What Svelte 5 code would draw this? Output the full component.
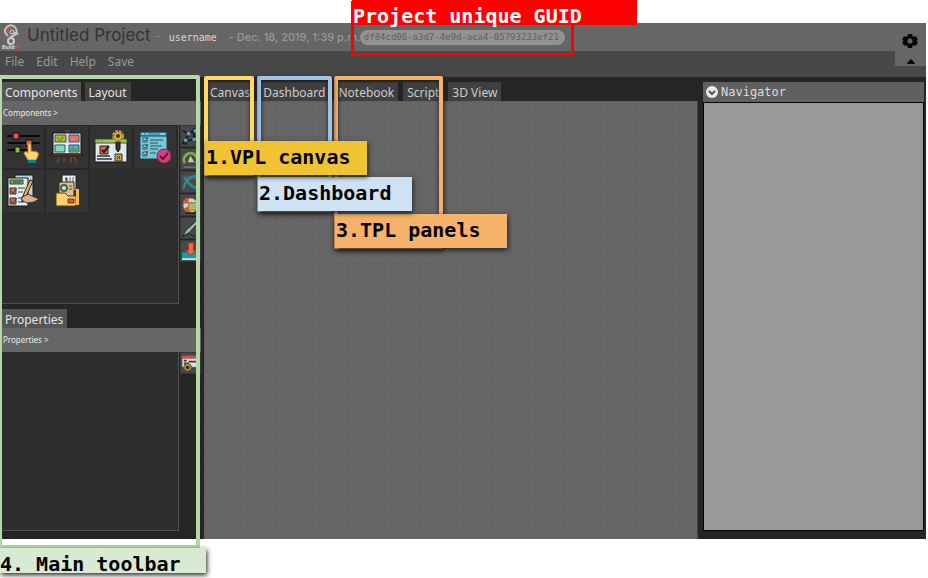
<script>
  const menus = ['File', 'Edit', 'Help', 'Save'];
  const views = ['Canvas', 'Dashboard', 'Notebook', 'Script', '3D View'];
  const parts = ['Sliders', 'Board', 'Settings form', 'Checklist', 'Survey', 'Folder'];
  const tools = ['Network', 'Gauge', 'Orbit', 'Analysis', 'Pen', 'Download'];
</script>

{#snippet partIcon(n)}
  <svg viewBox="0 0 34 34" aria-hidden="true">
    {#if n === 0}
      <path d="M2 6h31M2 13h31M2 20h20" stroke="#090b0d" stroke-width="2" stroke-linecap="round" />
      <path d="M7 3h6v6H7z" fill="#e64b43" stroke="#111" />
      <path d="M20 10h6v6h-6z" fill="#dc6527" stroke="#111" />
      <path d="M9 17h5v6H9z" fill="#8fbd42" stroke="#111" />
      <path d="M22 14q2-2 3 1v6l6 1q2 1 1 4l-2 4h-8l-4-7q1-3 4 0z" fill="#ffd276" stroke="#c88832" />
      <path d="M22 30h8v3h-8z" fill="#078290" />
    {:else if n === 1}
      <path d="M16 0h3v4h-3zM10 26l-3 7M24 26l3 7M14 26v6M21 26v7" fill="#683e2c" stroke="#683e2c" stroke-width="2" />
      <path d="M3 3h28v21H3z" fill="#dceaf5" stroke="#111" />
      <path d="M5 5h11v7H5z" fill="#b8b52d" stroke="#365060" />
      <path d="M19 5h10v7H19z" fill="#ed736a" stroke="#365060" />
      <path d="M5 15h10v7H5z" fill="#83dfb2" stroke="#365060" />
      <path d="M19 15h10v7H19z" fill="#46aee0" stroke="#365060" />
      <path d="M19 22l4-5 3 3 2-2 2 4z" fill="#639b35" />
      <path d="M7 8h2m2 0h3M8 10h4" stroke="#756d19" />
      <path d="M1 24h32v2H1z" fill="#70412e" stroke="#271b17" />
    {:else if n === 2}
      <path d="M1 9h32v23H1z" fill="#e2e7ef" stroke="#111" />
      <path d="M1 9h32v4H1z" fill="#9acb62" stroke="#445524" />
      <path d="M3 11h2m2 0h2" stroke="#e85145" />
      <path d="M6 16h8v8H6z" fill="#e65d4c" stroke="#222" />
      <path d="M8 20l2 2 5-6" fill="none" stroke="#222" stroke-width="2" />
      <path d="M3 26h13M3 29h15" stroke="#59616a" stroke-width="2" />
      <path d="M22 11h4v8l-2 3-2-3z" fill="#333" stroke="#111" />
      <circle cx="24" cy="6" r="5" fill="none" stroke="#c69932" stroke-width="2" stroke-dasharray="3 1" />
      <circle cx="24" cy="6" r="3" fill="#333" stroke="#d9ad3b" stroke-width="2" />
      <path d="M21 24h7v7h-7z" fill="#c6a24d" stroke="#333" /><path d="M23 26l3 3m0-3l-3 3" stroke="#333" />
    {:else if n === 3}
      <path d="M2 2h27v27H2z" fill="#78c6d8" stroke="#164150" />
      <path d="M2 2h27v4H2z" fill="#45a3bd" stroke="#164150" />
      <path d="M4 4h2m2 0h2m12 0h5" stroke="#d8f3f7" />
      <path d="M5 8h4v4H5zM5 15h4v4H5zM5 22h4v4H5z" fill="#b9e3ec" stroke="#174b60" />
      <path d="M6 10l1 1 3-4M6 17l1 1 3-4M6 24l1 1 3-4M12 10h13M12 13h8M12 16h12M12 19h8M12 23h6" fill="none" stroke="#21566b" />
      <circle cx="26" cy="26" r="7" fill="#dc3c82" stroke="#812b50" />
      <path d="M22 26l3 3 5-6" fill="none" stroke="#5e1739" stroke-width="2" />
    {:else if n === 4}
      <path d="M9 1h18v26H9z" fill="#bdd3e1" stroke="#121619" /><path d="M2 4h20v28H2z" fill="#e2edf3" stroke="#121619" />
      <path d="M4 6h13v4H4z" fill="#7eac59" stroke="#234323" /><path d="M7 8h8" stroke="#27482b" />
      <path d="M4 14h6v6H4zM4 24h6v6H4z" fill="#e06851" stroke="#342e2c" />
      <path d="M5 17l2 2 4-5M5 27l2 2 4-5M12 14h7M12 18h5M12 24h6M12 28h6" fill="none" stroke="#344048" />
      <path d="M24 6l3 1-8 18-3 3v-4z" fill="#f2b444" stroke="#292019" />
      <path d="M15 24l7-4 4 2 7 3-5 3-7 1-4-2z" fill="#d6b09a" stroke="#493328" />
    {:else}
      <path d="M12 1h14v16H12z" fill="#e8edf2" stroke="#222" /><path d="M15 4h2v6m3-7v7m3-7v7" stroke="#646a70" />
      <path d="M9 8h15v15H9z" fill="#dfbc91" stroke="#342b23" /><circle cx="14" cy="14" r="3" fill="#ddd" stroke="#376747" stroke-width="2" />
      <path d="M19 12h3m-3 3h3" stroke="#30583c" />
      <path d="M6 19h9l3 3h8v10H6z" fill="#ffd16c" stroke="#5b3c14" /><path d="M26 15h3v16h-3z" fill="#f7bd4f" />
      <path d="M18 25h6v4h-6z" fill="#c95e38" stroke="#71331e" />
    {/if}
  </svg>
{/snippet}

{#snippet toolIcon(n)}
  <svg viewBox="0 0 20 20" aria-hidden="true">
    {#if n === 0}
      <path d="M2 4l6 3 5-3 1-3M8 7l-3 8 9-2-1-9M5 15l-4 3M14 13l4 5M2 15h3v4" fill="none" stroke="#111d22" stroke-width="2" />
      <g fill="#4fa5be"><circle cx="8" cy="7" r="2" /><circle cx="5" cy="14" r="2" /><circle cx="14" cy="13" r="2" /><circle cx="15" cy="4" r="2" /></g>
    {:else if n === 1}
      <path d="M4 14a7 7 0 1 1 12 0" fill="none" stroke="#78ad43" stroke-width="3" /><path d="M7 13l3-7 4 7z" fill="#b8cfa1" /><path d="M3 18h14" stroke="#879279" />
    {:else if n === 2}
      <path d="M18 3Q5 2 3 16M3 4q3 9 16 14" fill="none" stroke="#168bc2" stroke-width="2" /><path d="M2 17Q7 3 19 5M5 2q2 11 14 14" fill="none" stroke="#60933b" />
    {:else if n === 3}
      <circle cx="10" cy="10" r="8" fill="#cfd4d3" stroke="#565c5c" /><path d="M2 8q0-6 6-6v6zM3 13l5-2 2 7q-5 0-7-5" fill="#d65334" /><path d="M8 7h10v8H8z" fill="#83b79b" stroke="#9b722e" /><path d="M9 10h9m-9 3h9" stroke="#d2b23e" stroke-width="2" /><path d="M5 18h13" stroke="#242b2b" stroke-width="2" />
    {:else if n === 4}
      <path d="M2 18l3-6L16 2l2 2L8 15z" fill="#97b6b5" stroke="#172326" /><path d="M1 19l7-4 4 3 7-1" fill="none" stroke="#172326" />
    {:else if n === 5}
      <path d="M1 11h6l3 3 3-3h7v7H1z" fill="#119eaa" /><path d="M1 17h19v2H1z" fill="#c7dcde" /><path d="M8 1h5v8h3l-6 5-5-5h3z" fill="#f26b3d" stroke="#9e4127" />
    {:else}
      <path d="M1 2h19v12H1z" fill="#e0e0e7" stroke="#5d5054" /><path d="M1 2h19v3H1z" fill="#c55347" /><path d="M3 7h3m2 1h10M3 10h5" stroke="#383b47" stroke-width="2" /><circle cx="7" cy="14" r="4" fill="#c29920" stroke="#5f4c16" /><circle cx="7" cy="14" r="2" fill="#333" />
    {/if}
  </svg>
{/snippet}

<div class="page">
  <div class="app">
    <header>
      <svg class="logo" viewBox="0 0 22 26" role="img" aria-label="Build IT">
        <path d="M8 12Q3 8 6 4q4-5 9-1 4 6-2 9l-3 1" fill="none" stroke="#c4c4c4" stroke-width="2" />
        <path d="M8 9q-2-4 3-5" fill="none" stroke="#d75524" stroke-width="2" />
        <circle cx="12" cy="8" r="2" fill="none" stroke="#ddd" /><path d="M14 9l4 1" stroke="#ccc" stroke-width="2" />
        <circle cx="11" cy="17" r="3" fill="none" stroke="#ccc" stroke-width="2" />
        <text x="2" y="25" font-size="5" font-weight="700" fill="#ddd">Build<tspan fill="#d75524">IT</tspan></text>
      </svg>
      <h1>Untitled Project</h1><span class="dash">–</span>
      <span class="user">username</span>
      <span class="date">- Dec. 18, 2019, 1:39 p.m.</span>
      <code>df84cd06-a3d7-4e9d-aca4-05793233ef21</code>
      <button class="gear" aria-label="Settings">
        <svg viewBox="0 0 16 16"><path fill="#080808" fill-rule="evenodd" d="M6 1h4l.5 2 1.400.8 2-.6 2 3.400L14.400 8l1.500 1.400-2 3.400-2-.6-1.400.8-.5 2H6l-.5-2-1.400-.8-2 .6-2-3.400L1.600 8 .1 6.600l2-3.400 2 .6L5.500 3zM8 5.500a2.500 2.500 0 1 0 0 5 2.500 2.500 0 0 0 0-5z" /></svg>
      </button>
    </header>
    <nav>
      {#each menus as m}<button>{m}</button>{/each}
      <button class="collapse" aria-label="Collapse header"><svg viewBox="0 0 10 5"><path d="M1 5q0-1 4-5 4 4 4 5z" fill="#080808" /></svg></button>
    </nav>

    <main>
      <aside class="left">
        <section>
          <div class="tabs side"><button class="on">Components</button><button>Layout</button></div>
          <a class="crumb" href="#components">Components &gt;</a>
          <div class="pane">
            <div class="parts">{#each parts as p, i}<button aria-label={p}>{@render partIcon(i)}</button>{/each}</div>
            <div class="tools">{#each tools as t, i}<button aria-label={t}>{@render toolIcon(i)}</button>{/each}</div>
          </div>
        </section>
        <section>
          <div class="tabs side"><button class="on">Properties</button></div>
          <a class="crumb" href="#properties">Properties &gt;</a>
          <div class="pane">
            <div class="parts"></div>
            <div class="tools"><button aria-label="Form settings">{@render toolIcon(6)}</button></div>
          </div>
        </section>
      </aside>
      <section class="work">
        <div class="tabs views">{#each views as v}<button>{v}</button>{/each}</div>
        <div class="canvas"></div>
      </section>
      <aside class="right">
        <button class="navhead">
          <svg viewBox="0 0 12 12" aria-hidden="true"><circle cx="6" cy="6" r="6" fill="#e8e8e8" /><path d="M3 5l3 3 3-3" fill="none" stroke="#555" stroke-width="2" /></svg>Navigator
        </button>
        <div class="map"></div>
      </aside>
    </main>
  </div>

  <div class="frame green"></div><div class="note green-note">4. Main toolbar</div>
  <div class="frame orange"></div>
  <div class="frame blue"></div>
  <div class="frame yellow"></div>
  <div class="note orange-note">3.TPL panels</div>
  <div class="note blue-note">2.Dashboard</div>
  <div class="note yellow-note">1.VPL canvas</div>
  <div class="frame red"></div><div class="note red-note">Project unique GUID</div>
</div>

<style>
  :global(body) { background: #fff; }
  * { box-sizing: border-box; }
  .page { position: relative; padding: 23px 2px 39px 0; overflow: hidden; font-family: "Noto Sans", "Open Sans", sans-serif; }
  button { border: 0; margin: 0; padding: 0; font: inherit; color: inherit; background: none; }
  svg { display: block; }
  .app { background: #252525; }
  header { display: flex; align-items: center; height: 28px; background: #666; color: #999; white-space: nowrap; }
  .logo { width: 22px; height: 26px; margin-right: 5px; flex: none; }
  h1 { margin: 0 4px 4px 0; font: 400 17px Inter, sans-serif; color: #333; }
  .dash { font-size: 12px; margin-bottom: 4px; color: #858585; }
  .user { margin-left: 8px; font: 10px "DejaVu Sans Mono", monospace; color: #d5d5d5; }
  .date { margin-left: 12px; width: 131px; font: 500 11px Inter, sans-serif; color: #999; }
  code { padding: 0 6px 0 4px; border-radius: 8px; background: #929292; color: #606060; font: 9px/15px "DejaVu Sans Mono", monospace; }
  .gear { margin: 8px 8px 0 auto; }
  .gear svg { width: 16px; height: 16px; }
  nav { display: flex; gap: 12px; height: 26px; padding-left: 5px; align-items: flex-start; background: #484848; color: #999; font-size: 12px; line-height: 21px; }
  .collapse { margin-left: auto; width: 31px; height: 15px; padding: 6px 0 0 11px; background: #666; }
  .collapse svg { width: 10px; height: 5px; }
  main { display: flex; }
  .left { width: 204px; flex: none; padding: 0 3px 8px 2px; background: #252525; }
  .tabs { display: flex; align-items: flex-end; height: 24px; color: #e5e5e5; font-size: 12px; }
  .tabs button { height: 19px; background: #404040; line-height: 21px; white-space: nowrap; }
  .side { gap: 4px; }
  .side button { padding: 0 4px 0 3px; }
  .tabs .on { background: #555; }
  .crumb { display: block; height: 24px; padding-left: 1px; background: #666; color: #e8e8e8; font-size: 8px; line-height: 24px; text-decoration: none; }
  .pane { display: flex; height: 179px; }
  .parts { flex: 1; min-width: 0; display: grid; grid-template-columns: repeat(4, 1fr); align-content: start; background: #2d2d2d; border: solid #505050; border-width: 0 1px 1px 0; }
  .parts button { height: 44px; padding: 4px; background: #333; border: solid #292929; border-width: 1px 2px 1px 0; }
  .parts svg { width: 34px; height: 34px; }
  .tools { width: 22px; flex: none; padding-left: 1px; display: flex; flex-direction: column; gap: 1px; }
  .tools button { height: 22px; background: #484848; border: 1px solid #383838; overflow: hidden; }
  .tools svg { width: 19px; height: 19px; }
  .work { flex: 1; min-width: 0; display: flex; flex-direction: column; }
  .views { gap: 5px; padding-left: 2px; }
  .views button { padding: 0 4px; color: #ccc; }
  .canvas { flex: 1; background-color: #666; background-image: linear-gradient(90deg, #616161 1px, transparent 1px), linear-gradient(#616161 1px, transparent 1px); background-size: 18px 18px; border-right: 1px solid #444; }
  .right { width: 228px; flex: none; padding: 5px 2px 8px 5px; display: flex; flex-direction: column; }
  .navhead { display: flex; align-items: center; gap: 3px; height: 20px; padding-left: 3px; background: #606060; color: #ddd; font: 12px/20px "DejaVu Sans Mono", monospace; }
  .navhead svg { width: 12px; height: 12px; }
  .map { flex: 1; background: #999; border: 1px solid #050505; }

  .frame { position: absolute; border: 4px solid; border-radius: 2px; pointer-events: none; }
  .yellow, .blue, .orange { top: 76px; box-shadow: 1px 2px 5px #222, inset 0 0 4px #222; }
  .green { left: -2px; top: 75px; width: 202px; height: 474px; border-color: #b6d7a8; }
  .yellow { left: 204px; width: 50px; height: 100px; border-color: #ffd966; }
  .blue { left: 257px; width: 75px; height: 136px; border-color: #9fc5e8; }
  .orange { left: 334px; width: 109px; height: 173px; border-color: #f6b26b; }
  .red { left: 351px; top: 1px; width: 223px; height: 55px; border: 3px solid #f00; border-top: 0; border-radius: 0; }
  .note { position: absolute; padding-left: 1px; color: #000; font: 700 20px/32px "DejaVu Sans Mono", monospace; white-space: nowrap; box-shadow: 1px 2px 5px #222; }
  .yellow-note { left: 205px; top: 141px; width: 162px; height: 34px; background: #f1c232; }
  .blue-note { left: 258px; top: 177px; width: 154px; height: 34px; background: #cfe2f3; }
  .orange-note { left: 335px; top: 214px; width: 172px; height: 34px; background: #f6b26b; }
  .green-note { left: 0; top: 548px; width: 206px; height: 25px; padding: 0; background: #d9ead3; }
  .red-note { left: 352px; top: 0; width: 285px; height: 25px; background: #f00; color: #fff; box-shadow: none; }
</style>
